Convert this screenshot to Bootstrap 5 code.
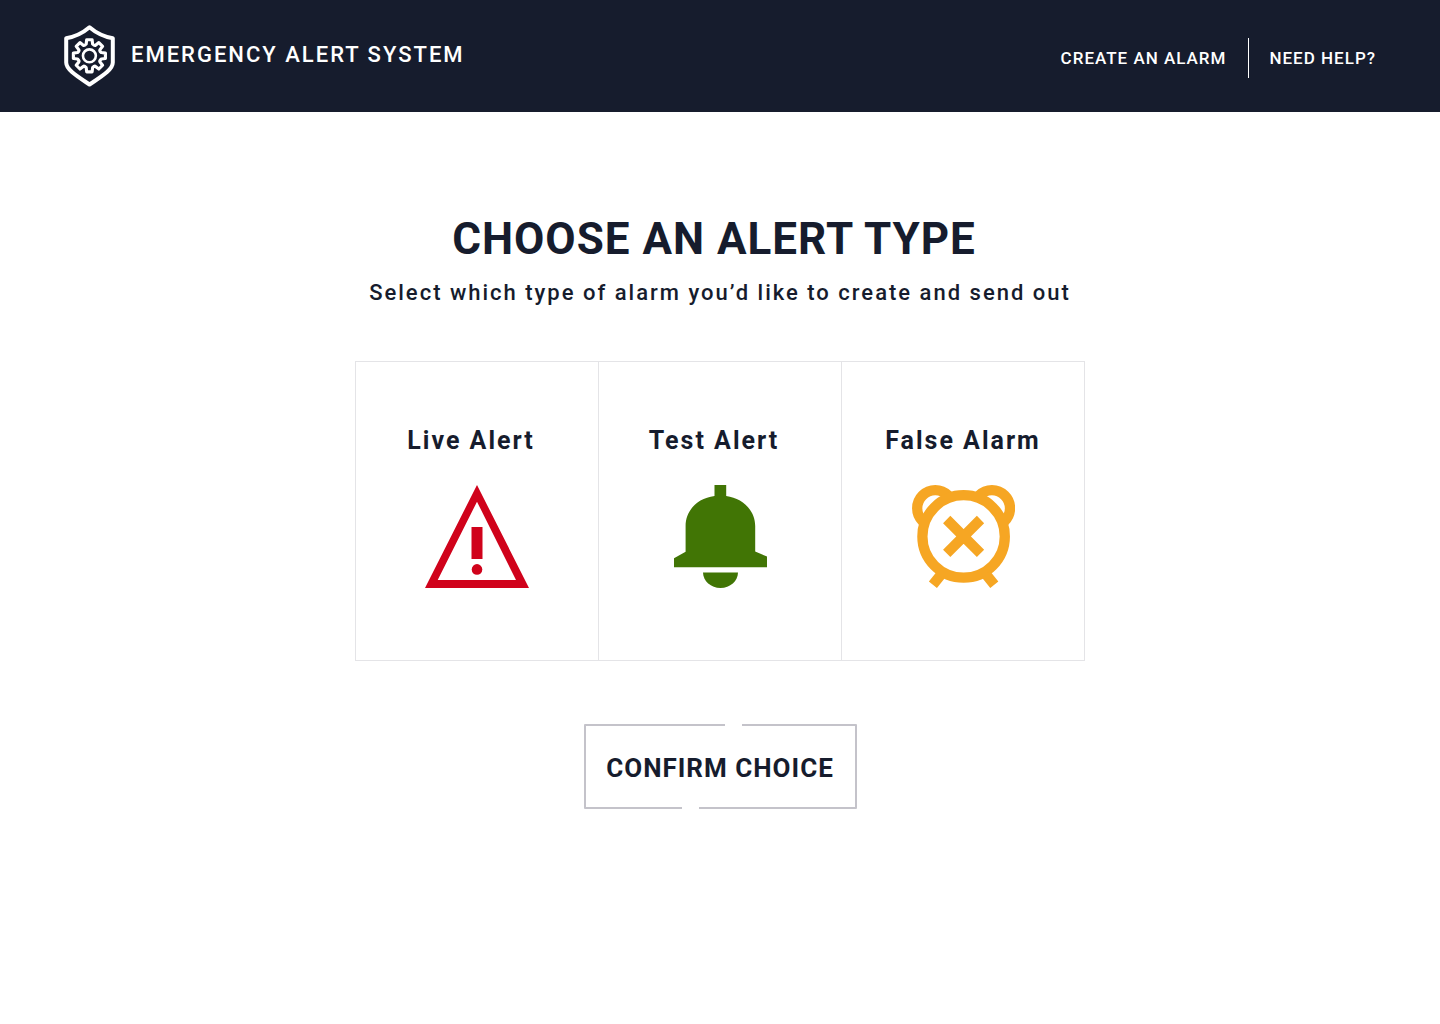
<!DOCTYPE html>
<html lang="en">
<head>
<meta charset="utf-8">
<meta name="viewport" content="width=device-width, initial-scale=1">
<title>Emergency Alert System</title>
<link href="https://cdn.jsdelivr.net/npm/bootstrap@5.3.0/dist/css/bootstrap.min.css" rel="stylesheet">
<style>
:root { --ink: #161c2d; --rule: #e4e4e7; }
body { font-family: Roboto, "Liberation Sans", sans-serif; color: var(--ink); letter-spacing: 2px; font-weight: 500; }
.site-header { background: var(--ink); min-height: 112px; padding: 0 64px; }
.brand-name { font-size: 22px; line-height: 28px; padding-bottom: 2px; }
.site-nav { font-size: 17px; line-height: 40px; letter-spacing: 1px; padding-top: 4px; }
.site-nav a + a { border-left: 1px solid #fff; margin-left: 22px; padding-left: 20px; }
.page-title { font-size: 44px; line-height: 54px; font-weight: 700; letter-spacing: 1px; padding-right: 12px; }
.page-intro { font-size: 22px; line-height: 30px; margin: 12px 0 53px; }
main { padding-top: 100px; }
.choices { max-width: 730px; border: 1px solid var(--rule); }
.choice { padding: 63px 0 72px; cursor: pointer; }
.choice-cell + .choice-cell { border-left: 1px solid var(--rule); }
.choice-name { font-size: 25px; line-height: 32px; font-weight: 700; }
.choice-name-inset { padding-right: 12px; }
.btn-check:checked + .choice { background: #f1f2f5; }
.btn-check:focus-visible + .choice { outline: 2px solid var(--ink); }
.confirm { position: relative; min-width: 273px; margin-top: 63px; border: 2px solid #c4c3ca; border-radius: 1px; background: #fff; color: var(--ink); font-size: 26px; line-height: 32px; font-weight: 700; letter-spacing: 1px; padding: 26px 20px 23px; }
.confirm::before, .confirm::after { content: ""; position: absolute; width: 17px; height: 2px; background: #fff; }
.confirm::before { top: -2px; left: 52%; }
.confirm::after { bottom: -2px; left: 36%; }
</style>
</head>
<body>
<header class="site-header d-flex flex-wrap align-items-center justify-content-between">
  <a href="#" class="d-flex align-items-center gap-3 text-white text-decoration-none">
    <svg width="51" height="62" viewBox="0 0 51 62" fill="none" stroke="#fff" stroke-linejoin="round" aria-hidden="true">
      <path stroke-width="4" d="M25.5 2.3C20 7 11 11.8 2.200 13.300V37.500C2.200 45 14.500 52 25.500 59.500C36.500 52 48.800 45 48.800 37.500V13.300C40 11.800 31 7 25.500 2.300Z"/>
      <g transform="translate(25.4 30.800) scale(1.04)" stroke-width="3">
        <path d="M-3.100-11.400L-2.600-15.400H2.600L3.100-11.400Q4.900-9.400 5.900-10.200L9.100-12.700L12.700-9.100L10.200-5.900Q9.400-4.900 11.400-3.100L15.400-2.600V2.600L11.400 3.100Q9.400 4.900 10.200 5.900L12.700 9.100L9.100 12.700L5.900 10.200Q4.900 9.400 3.100 11.400L2.600 15.400H-2.600L-3.100 11.400Q-4.900 9.400-5.900 10.200L-9.100 12.700L-12.700 9.100L-10.200 5.900Q-9.400 4.900-11.400 3.100L-15.400 2.600V-2.600L-11.400-3.100Q-9.400-4.900-10.200-5.900L-12.700-9.100L-9.100-12.700L-5.900-10.200Q-4.900-9.400-3.100-11.400Z"/>
        <circle r="6.200" stroke-width="2.500"/>
      </g>
    </svg>
    <span class="brand-name">EMERGENCY ALERT SYSTEM</span>
  </a>
  <nav class="site-nav d-flex" aria-label="Main">
    <a href="#" class="text-white text-decoration-none">CREATE AN ALARM</a>
    <a href="#" class="text-white text-decoration-none">NEED HELP?</a>
  </nav>
</header>

<main class="container text-center pb-5">
  <h1 class="page-title mb-0">CHOOSE AN ALERT TYPE</h1>
  <p class="page-intro">Select which type of alarm you’d like to create and send out</p>
  <form>
    <div class="choices row g-0 mx-auto" role="radiogroup" aria-label="Alert type">
      <div class="choice-cell col">
        <input class="btn-check" type="radio" name="alert-type" id="type-live">
        <label class="choice d-flex flex-column align-items-center" for="type-live">
          <span class="choice-name choice-name-inset mb-4 pb-1">Live Alert</span>
          <svg width="104" height="103" viewBox="0 0 104 103" fill="#d0021b" aria-hidden="true">
            <path fill-rule="evenodd" d="M52 0L104 103H0ZM52 16.700L12.700 95H91Z"/>
            <path d="M46.500 42H57.500V74H46.500Z"/><circle cx="52" cy="84.400" r="5.300"/>
          </svg>
        </label>
      </div>
      <div class="choice-cell col">
        <input class="btn-check" type="radio" name="alert-type" id="type-test">
        <label class="choice d-flex flex-column align-items-center" for="type-test">
          <span class="choice-name choice-name-inset mb-4 pb-1">Test Alert</span>
          <svg width="93" height="103" viewBox="0 0 93 103" fill="#417505" aria-hidden="true">
            <path d="M40.500 0H52.200V11C68 13 81.200 25 81.200 41V66.500L93 71.500V82.300H0V73.300L11.600 66.800V41C11.600 25 24 13 40.500 11Z"/>
            <path d="M29 87.500H64C64 96 56 103 46.500 103S29 96 29 87.500Z"/>
          </svg>
        </label>
      </div>
      <div class="choice-cell col">
        <input class="btn-check" type="radio" name="alert-type" id="type-false">
        <label class="choice d-flex flex-column align-items-center" for="type-false">
          <span class="choice-name mb-4 pb-1">False Alarm</span>
          <svg width="103" height="103" viewBox="0 0 103 103" fill="none" stroke="#f6a623" stroke-width="10.300" aria-hidden="true">
            <circle cx="23.300" cy="23.300" r="18.100"/><circle cx="79.900" cy="23.300" r="18.100"/>
            <circle cx="51.600" cy="51.400" r="41.200" fill="#fff"/>
            <path d="M34.700 34.500L68.500 68.300M68.500 34.500L34.700 68.300"/>
            <path d="M29.500 89L20.900 99.800M73.700 89L82.300 99.800"/>
          </svg>
        </label>
      </div>
    </div>
    <button type="button" class="confirm">CONFIRM CHOICE</button>
  </form>
</main>
<script src="https://cdn.jsdelivr.net/npm/bootstrap@5.3.0/dist/js/bootstrap.bundle.min.js"></script>
</body>
</html>
